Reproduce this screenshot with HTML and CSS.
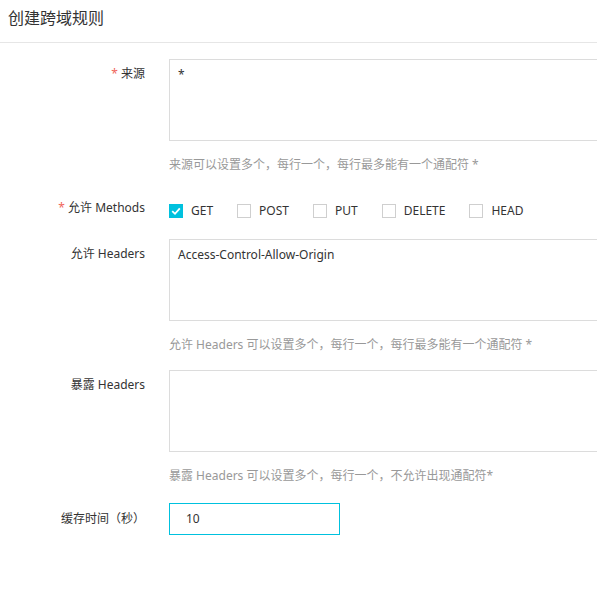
FILE: index.html
```html
<!DOCTYPE html>
<html lang="zh-CN">
<head>
<meta charset="utf-8">
<title>创建跨域规则</title>
<link rel="stylesheet" href="styles.css">
</head>
<body>
<div class="page">
  <div class="header"><h1 class="title">创建跨域规则</h1></div>
  <form class="form">
    <div class="row row-origin">
      <label class="label"><span class="req">*</span> 来源</label>
      <div class="control">
        <div class="textarea">*</div>
        <div class="help">来源可以设置多个，每行一个，每行最多能有一个通配符 *</div>
      </div>
    </div>
    <div class="row row-methods">
      <label class="label label-methods"><span class="req">*</span> 允许 Methods</label>
      <div class="control checks">
        <span class="check"><span class="box checked"><svg viewBox="0 0 14 14" width="14" height="14"><path d="M3.2 7.2 L6 9.8 L10.8 4.4" fill="none" stroke="#fff" stroke-width="1.8"/></svg></span>GET</span>
        <span class="check"><span class="box"></span>POST</span>
        <span class="check"><span class="box"></span>PUT</span>
        <span class="check"><span class="box"></span>DELETE</span>
        <span class="check"><span class="box"></span>HEAD</span>
      </div>
    </div>
    <div class="row row-headers">
      <label class="label">允许 Headers</label>
      <div class="control">
        <div class="textarea">Access-Control-Allow-Origin</div>
        <div class="help">允许 Headers 可以设置多个，每行一个，每行最多能有一个通配符 *</div>
      </div>
    </div>
    <div class="row row-expose">
      <label class="label">暴露 Headers</label>
      <div class="control">
        <div class="textarea"></div>
        <div class="help">暴露 Headers 可以设置多个，每行一个，不允许出现通配符*</div>
      </div>
    </div>
    <div class="row row-cache">
      <label class="label label-cache">缓存时间（秒）</label>
      <div class="control">
        <div class="input">10</div>
      </div>
    </div>
  </form>
</div>
</body>
</html>
```
FILE: styles.css
```css
html, body {
  margin: 0;
  padding: 0;
  background: #fff;
  overflow: hidden;
}
body {
  font-family: "Noto Sans", "Noto Sans CJK SC", sans-serif;
  font-size: 12px;
  color: #333;
}
.page {
  width: 597px;
  height: 595px;
  overflow: hidden;
}
.header {
  height: 42px;
  border-bottom: 1px solid #e6e6e6;
  display: flex;
  align-items: center;
  padding-left: 8px;
}
.title {
  margin: 0;
  font-size: 16px;
  font-weight: normal;
  color: #333;
  line-height: 22px;
  margin-top: -6px;
}
.form {
  padding-top: 16px;
}
.row {
  display: grid;
  grid-template-columns: 145px 1fr;
  column-gap: 24px;
}
.label {
  text-align: right;
  line-height: 18px;
  padding-top: 6px;
  color: #333;
  white-space: nowrap;
}
.req {
  color: #f0655a;
}
.textarea {
  width: 460px;
  height: 80px;
  border: 1px solid #dcdcdc;
  box-sizing: content-box;
  padding: 6px 8px;
  box-sizing: border-box;
  height: 82px;
  line-height: 18px;
  color: #333;
}
.help {
  margin-top: 15px;
  line-height: 18px;
  color: #999;
}
.row-origin { margin-bottom: 23px; }
.row-methods { margin-bottom: 14px; height: 28px; }
.label-methods { padding-top: 2px; }
.checks {
  display: flex;
  align-items: center;
  gap: 24px;
  height: 28px;
}
.check {
  display: flex;
  align-items: center;
  gap: 8px;
  line-height: 18px;
}
.box {
  width: 14px;
  height: 14px;
  box-sizing: border-box;
  border: 1px solid #cfcfcf;
  background: #fff;
  display: block;
}
.box.checked {
  border-color: #00c1de;
  background: #00c1de;
}
.box svg {
  display: block;
  margin: -1px;
}
.row-headers { margin-bottom: 16px; }
.row-expose { margin-bottom: 18px; }
.label-cache { padding-top: 7px; }
.input {
  width: 171px;
  height: 32px;
  box-sizing: border-box;
  border: 1px solid #00c1de;
  padding: 0 16px;
  line-height: 30px;
  color: #333;
}
```
